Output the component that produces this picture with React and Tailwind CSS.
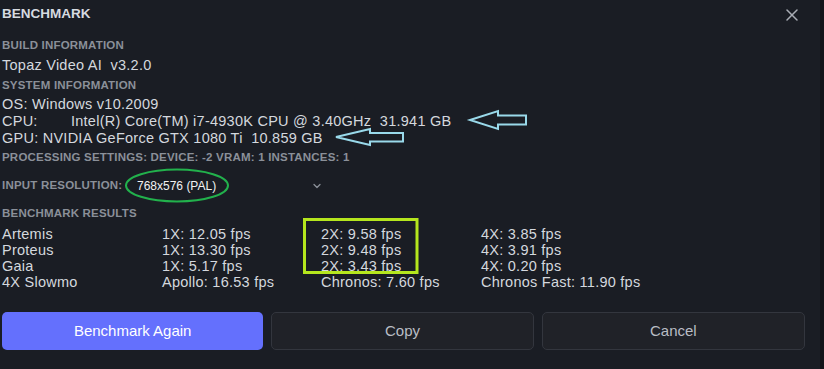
import React from 'react';
import { X, ChevronDown } from 'lucide-react';

const results = [
  ['Artemis', '1X: 12.05 fps', '2X: 9.58 fps', '4X: 3.85 fps'],
  ['Proteus', '1X: 13.30 fps', '2X: 9.48 fps', '4X: 3.91 fps'],
  ['Gaia', '1X: 5.17 fps', '2X: 3.43 fps', '4X: 0.20 fps'],
  ['4X Slowmo', 'Apollo: 16.53 fps', 'Chronos: 7.60 fps', 'Chronos Fast: 11.90 fps'],
];

const Heading = ({ children, className = '' }) => (
  <div className={`h-[20px] flex items-center text-[11.5px] font-bold tracking-[0.2px] text-[#8b9099] ${className}`}>{children}</div>
);

const Line = ({ children }) => (
  <div className="h-[17px] flex items-center whitespace-pre">{children}</div>
);

const App = () => {
  return (
    <div
      className="relative w-[824px] h-[369px] overflow-hidden bg-[#1a1d24] border-r-4 border-[#121419] text-[14.5px] tracking-[0.25px] text-[#d4d8de] pl-[2px] pr-[15px]"
      style={{ fontFamily: '"Liberation Sans", Arial, sans-serif' }}
    >
      {/* Title */}
      <div className="h-[29px] flex items-center justify-between">
        <span className="text-[13.5px] font-bold tracking-normal text-[#d6dae0]">BENCHMARK</span>
        <X size={20} strokeWidth={1.8} className="text-[#a9adb5] mr-[3px]" />
      </div>

      <Heading className="mt-[7px]">BUILD INFORMATION</Heading>
      <div className="h-[20px] flex items-center whitespace-pre">Topaz Video AI  v3.2.0</div>
      <Heading>SYSTEM INFORMATION</Heading>
      <Line>OS: Windows v10.2009</Line>
      <Line>
        <span className="inline-block w-[69px]">CPU:</span>Intel(R) Core(TM) i7-4930K CPU @ 3.40GHz  31.941 GB
      </Line>
      <Line>GPU: NVIDIA GeForce GTX 1080 Ti  10.859 GB</Line>
      <Heading className="mt-[1px]">PROCESSING SETTINGS: DEVICE: -2 VRAM: 1 INSTANCES: 1</Heading>

      {/* Input resolution */}
      <div className="h-[36px] flex items-center">
        <span className="text-[11.5px] font-bold tracking-[0.2px] text-[#8b9099] w-[135px]">INPUT RESOLUTION:</span>
        <span className="text-[12px] tracking-normal text-[#f2f2f2] w-[174px]">768x576 (PAL)</span>
        <ChevronDown size={12} strokeWidth={2.5} className="text-[#8b9099]" />
      </div>

      <Heading>BENCHMARK RESULTS</Heading>
      <div className="mt-[3px] grid grid-cols-[160px_159px_160px_1fr]">
        {results.map((row) =>
          row.map((cell, i) => (
            <div key={row[0] + i} className="h-[16px] flex items-center">{cell}</div>
          ))
        )}
      </div>

      {/* Buttons */}
      <div className="mt-[21px] flex gap-[7.5px]">
        <button className="flex-1 h-[38px] rounded-[5px] bg-[#6470fd] text-white text-[15px] tracking-normal">Benchmark Again</button>
        <button className="flex-1 h-[38px] rounded-[5px] bg-[#202228] border border-[#33363e] text-[#b9bdc5] text-[15px] tracking-normal">Copy</button>
        <button className="flex-1 h-[38px] rounded-[5px] bg-[#202228] border border-[#33363e] text-[#b9bdc5] text-[15px] tracking-normal">Cancel</button>
      </div>

      {/* Annotations drawn over the screenshot */}
      <svg className="absolute left-0 top-0 pointer-events-none" width="824" height="369">
        <polygon
          points="470,120 498,111 498,115.5 526,115.5 526,124.5 498,124.5 498,129"
          fill="none"
          stroke="#99d9ea"
          strokeWidth="2"
        />
        <polygon
          points="336,137 370,129 370,133 403,133 403,141.5 370,141.5 370,145"
          fill="none"
          stroke="#99d9ea"
          strokeWidth="2"
        />
        <ellipse cx="177" cy="185.5" rx="51" ry="16" fill="none" stroke="#22b14c" strokeWidth="2" />
        <rect x="304.5" y="219.5" width="112.5" height="53" fill="none" stroke="#b5e61d" strokeWidth="3" />
      </svg>
    </div>
  );
};

export default App;
